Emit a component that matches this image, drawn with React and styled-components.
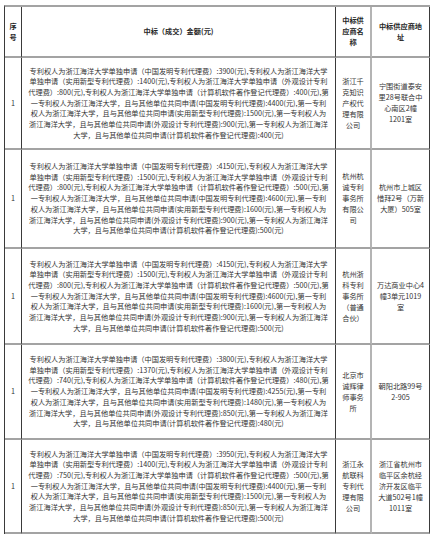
import React from "react";
import styled, { createGlobalStyle } from "styled-components";

const Global = createGlobalStyle`
  html, body { margin: 0; padding: 0; background: #ffffff; }
  body {
    font-family: "Noto Sans CJK SC", "Noto Sans", sans-serif;
    color: #333333;
  }
`;

const Page = styled.div`
  padding: 5px 0 0 4px;
`;

const Table = styled.div`
  display: grid;
  width: max-content;
  grid-template-columns: 17px 314px 36px 58px;
  grid-template-rows: 51px 92px 99px 96px 95px 94px;
  border-top: 2px solid #a3a3a3;
  border-left: 1px solid #3a3a3a;
`;

const Cell = styled.div`
  box-sizing: border-box;
  display: flex;
  flex-direction: column;
  align-items: center;
  justify-content: center;
  text-align: center;
  white-space: nowrap;
  overflow: visible;
  border-bottom: 2px solid #a3a3a3;
  border-right: ${(p) => (p.$soft ? "2px solid #b4b4b4" : "1px solid #3a3a3a")};
  font-size: 7.2px;
  line-height: ${(p) => p.$lh || 11}px;
  font-weight: ${(p) => (p.$head ? 700 : 400)};
  color: ${(p) => (p.$head ? "#262626" : "#333333")};
`;

const Line = styled.span`
  display: block;
`;

const makeLines = ([a, b, c, d, e, f, g, h]) => [
  `专利权人为浙江海洋大学单独申请（中国发明专利代理费）:${a}(元),专利权人为浙江海洋大学`,
  `单独申请（实用新型专利代理费）:${b}(元),专利权人为浙江海洋大学单独申请（外观设计专利`,
  `代理费）:${c}(元),专利权人为浙江海洋大学单独申请（计算机软件著作登记代理费）:${d}(元),第`,
  `一专利权人为浙江海洋大学，且与其他单位共同申请(中国发明专利代理费):${e}(元),第一专利`,
  `权人为浙江海洋大学，且与其他单位共同申请(实用新型专利代理费):${f}(元),第一专利权人为`,
  `浙江海洋大学，且与其他单位共同申请(外观设计专利代理费):${g}(元),第一专利权人为浙江海洋`,
  `大学，且与其他单位共同申请(计算机软件著作登记代理费):${h}(元)`,
];

const rows = [
  {
    amounts: [3900, 1400, 800, 400, 4400, 1500, 900, 400],
    supplier: ["浙江千", "克知识", "产权代", "理有限", "公司"],
    addr: ["宁围街道泰安", "里28号联合中", "心南区2幢", "1201室"],
  },
  {
    amounts: [4150, 1500, 800, 500, 4600, 1600, 900, 500],
    supplier: ["杭州杭", "诚专利", "事务所", "有限公", "司"],
    addr: ["杭州市上城区", "惜拜2号（万新", "大厦）505室"],
  },
  {
    amounts: [4150, 1500, 800, 500, 4600, 1600, 900, 500],
    supplier: ["杭州浙", "科专利", "事务所", "（普通", "合伙）"],
    addr: ["万达商业中心4", "幢3单元1019", "室"],
  },
  {
    amounts: [3800, 1370, 740, 480, 4255, 1480, 850, 480],
    supplier: ["北京市", "诚辉律", "师事务", "所"],
    addr: ["朝阳北路99号", "2-905"],
  },
  {
    amounts: [3950, 1400, 750, 500, 4400, 1500, 850, 500],
    supplier: ["浙江永", "航联科", "专利代", "理有限", "公司"],
    addr: ["浙江省杭州市", "临平区余杭经", "济开发区临平", "大道502号1幢", "1011室"],
  },
];

const Lines = ({ items }) => items.map((t, i) => <Line key={i}>{t}</Line>);

export default function App() {
  return (
    <>
      <Global />
      <Page>
        <Table>
          <Cell $head>
            <Lines items={["序", "号"]} />
          </Cell>
          <Cell $head>中标（成交）金额(元)</Cell>
          <Cell $head $soft>
            <Lines items={["中标供", "应商名", "称"]} />
          </Cell>
          <Cell $head>
            <Lines items={["中标供应商地", "址"]} />
          </Cell>
          {rows.map((r, i) => (
            <React.Fragment key={i}>
              <Cell>1</Cell>
              <Cell $lh={10.7}>
                <Lines items={makeLines(r.amounts)} />
              </Cell>
              <Cell $soft>
                <Lines items={r.supplier} />
              </Cell>
              <Cell>
                <Lines items={r.addr} />
              </Cell>
            </React.Fragment>
          ))}
        </Table>
      </Page>
    </>
  );
}
